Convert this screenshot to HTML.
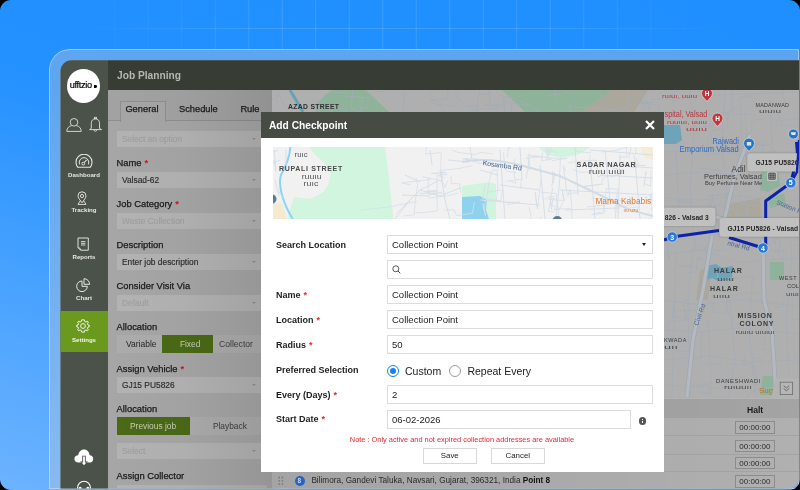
<!DOCTYPE html>
<html><head><meta charset="utf-8">
<style>
*{box-sizing:border-box;margin:0;padding:0}
html,body{width:800px;height:490px;overflow:hidden;background:#000;font-family:"Liberation Sans",sans-serif}
.a{position:absolute;white-space:nowrap}
#root{position:absolute;left:0;top:0;width:800px;height:490px;will-change:transform;border-radius:11px;overflow:hidden;
 background:linear-gradient(200deg,#1f8fff 0%,#2391ff 45%,#6db3ff 100%)}
#grid{position:absolute;left:0;top:0;width:800px;height:49px;
 background-image:linear-gradient(90deg,rgba(255,255,255,.13) 1px,transparent 1px),linear-gradient(0deg,rgba(255,255,255,.13) 1px,transparent 1px);
 background-size:33.5px 33.5px;background-position:13.75px 29px;
 -webkit-mask-image:radial-gradient(ellipse 330px 120px at 400px 20px,#000 40%,transparent 100%)}
#frame{position:absolute;left:49px;top:49px;width:750px;height:439.5px;border-radius:21px 0 0 0;background:rgba(190,200,215,.38);border:1px solid rgba(230,240,255,.45)}
#app{position:absolute;left:0;top:0;width:800px;height:490px;clip-path:inset(60.3px 1px 1.5px 60.5px round 11px 0 10px 0);background:#a2a2a2}
#side{left:60px;top:60px;width:48px;height:430px;background:#4b5249}
.sl{left:60px;width:48px;text-align:center;font-size:6.1px;font-weight:bold;color:#e6e8e4}
#hdr{left:108px;top:60px;width:700px;height:30px;background:#373c35}
#panel{left:108px;top:90px;width:164px;height:400px;background:#a6a6a6}
.lbl{left:116.5px;font-size:9.4px;color:#1a1a1a;-webkit-text-stroke:0.25px #1a1a1a}
.tab{top:103.6px;font-size:9.3px;color:#1a1a1a;-webkit-text-stroke:0.25px #1a1a1a}
.lbl b{color:#c4161c;font-weight:bold;margin-left:3px;-webkit-text-stroke:0}
.fld{left:116.5px;width:150px;height:16px;background:#b3b3b3;font-size:8.4px;color:#2c2c2c;-webkit-text-stroke:0.15px #2c2c2c;padding-left:5.5px;line-height:16px}
.fld.ph{color:#9f9f9f;-webkit-text-stroke:0.1px #9f9f9f}
.fld i{position:absolute;left:135px;top:7px;width:0;height:0;border-left:2.5px solid transparent;border-right:2.5px solid transparent;border-top:2.5px solid #909090}
#map{left:272px;top:90px;width:530px;height:307.5px;background:#a9a9a9;overflow:hidden}
#table{left:272px;top:397.5px;width:530px;height:95px;background:#b0b0b0}
#modal{left:261px;top:112px;width:403px;height:360px;background:#fff}
#mhdr{left:0;top:0;width:403px;height:26px;background:#464c44}
.ml{left:15px;font-size:9px;font-weight:bold;color:#1e1e1e}
.ml b{color:#e3262b;margin-left:3px}
.in{left:126px;width:266px;height:19.4px;border:1px solid #dcdcdc;font-size:9.5px;color:#222;padding-left:4px;line-height:18.4px}
.halt{left:735.1px;width:39.7px;height:12.7px;border:1px solid #8c8c8c;background:#b0b0b0;font-size:8px;color:#2a2a2a;text-align:center;line-height:11px}
.btn{top:336px;width:53.5px;height:15.5px;border:1px solid #d8d8d8;font-size:7.9px;color:#222;text-align:center;line-height:14.2px}
</style></head><body>
<div id="root">
 <div id="grid"></div>
 <div id="frame"></div>
 <div id="app">
  <div class="a" id="side"></div>
  <div class="a" style="left:66.6px;top:69px;width:33.6px;height:33.6px;border-radius:50%;background:#fff"></div>
  <span class="a" style="left:69.8px;top:80.2px;font-size:9.2px;letter-spacing:-0.35px;color:#000;-webkit-text-stroke:0.2px #000">ufftzio</span>
  <div class="a" style="left:94.2px;top:85px;width:2.4px;height:2.8px;border-radius:0 50% 50% 0;background:#000"></div>
  <svg class="a" style="left:66px;top:116.8px" width="16" height="16" viewBox="0 0 16 16"><circle cx="8" cy="5.3" r="3.8" fill="none" stroke="#dfe2dd" stroke-width="0.9"/><path d="M5.4 8.7 C2.8 9.3 0.8 11 0.8 14.4 L15.2 14.4 C15.2 11 13.2 9.3 10.6 8.7" fill="none" stroke="#dfe2dd" stroke-width="0.9" stroke-linejoin="round"/></svg>
  <svg class="a" style="left:89px;top:116px" width="14" height="17" viewBox="0 0 14 17"><rect x="5.4" y="1.3" width="2" height="1.5" fill="none" stroke="#dfe2dd" stroke-width="0.8"/><path d="M2.3 12.4 L2.3 7.2 C2.3 4.4 4 2.8 6.4 2.8 C8.8 2.8 10.5 4.4 10.5 7.2 L10.5 12.4 L12.6 13.6 L0.6 13.6 Z" fill="none" stroke="#dfe2dd" stroke-width="0.9" stroke-linejoin="round"/><path d="M4.7 13.8 C4.9 15.6 7.9 15.6 8.1 13.8" fill="none" stroke="#dfe2dd" stroke-width="0.9"/></svg>
  <svg class="a" style="left:74.5px;top:154.2px" width="18" height="14" viewBox="0 0 18 14"><path d="M2.8 13.3 A8 8 0 1 1 15.2 13.3 Z" fill="none" stroke="#e6e8e4" stroke-width="1.1" stroke-linejoin="round"/><path d="M4.6 10.4 A4.8 4.8 0 1 1 13.4 10.4" fill="none" stroke="#e6e8e4" stroke-width="1"/><circle cx="8.3" cy="9.6" r="1.4" fill="none" stroke="#e6e8e4" stroke-width="1"/><path d="M9.3 8.5 L11.6 5.8" stroke="#e6e8e4" stroke-width="1.1"/></svg>
  <span class="a sl" style="top:170.5px">Dashboard</span>
  <svg class="a" style="left:77.2px;top:191px" width="10" height="15" viewBox="0 0 10 15"><path d="M5 11.8 C3.2 9.2 1 7 1 4.8 A4 4 0 0 1 9 4.8 C9 7 6.8 9.2 5 11.8 Z" fill="none" stroke="#e6e8e4" stroke-width="0.95"/><circle cx="5" cy="5" r="1.6" fill="none" stroke="#e6e8e4" stroke-width="0.9"/><path d="M3.4 9.6 L1 13.4 L9 13.4 L6.6 9.6" fill="none" stroke="#e6e8e4" stroke-width="0.9"/></svg>
  <span class="a sl" style="top:205.5px">Tracking</span>
  <svg class="a" style="left:77.3px;top:236.5px" width="12" height="15" viewBox="0 0 12 15"><path d="M1 1 L11.3 1 L11.3 13.2 L3.6 13.2 L1 10.6 Z" fill="none" stroke="#e6e8e4" stroke-width="0.95" stroke-linejoin="round"/><path d="M1.2 10.8 C2.6 10.6 3.6 11.4 3.5 13" fill="none" stroke="#e6e8e4" stroke-width="0.9"/><path d="M4 4.6 L8.4 4.6 M4 6.3 L8.4 6.3 M4 8 L8.4 8" stroke="#e6e8e4" stroke-width="0.9"/></svg>
  <span class="a sl" style="top:252.5px">Reports</span>
  <svg class="a" style="left:76px;top:277.5px" width="15" height="15" viewBox="0 0 15 15"><path d="M6 3 A5.3 5.3 0 1 0 11.3 8.3 L6 8.3 Z" fill="none" stroke="#e6e8e4" stroke-width="1" stroke-linejoin="round"/><path d="M8 0.7 L8 6.3 L13.6 6.3 A5.6 5.6 0 0 0 8 0.7 Z" fill="none" stroke="#e6e8e4" stroke-width="1" stroke-linejoin="round"/></svg>
  <span class="a sl" style="top:294px">Chart</span>
  <div class="a" style="left:60px;top:311px;width:48px;height:41px;background:#6a991e"></div>
  <svg class="a" style="left:76px;top:318.5px" width="14" height="14" viewBox="0 0 14 14"><path d="M7 0.8 L8.3 0.9 L8.7 2.5 L10 3.1 L11.4 2.2 L12.3 3.2 L11.5 4.6 L12 6 L13.3 6.3 L13.3 7.7 L12 8 L11.5 9.4 L12.3 10.8 L11.4 11.8 L10 10.9 L8.7 11.5 L8.3 13.1 L5.7 13.1 L5.3 11.5 L4 10.9 L2.6 11.8 L1.7 10.8 L2.5 9.4 L2 8 L0.7 7.7 L0.7 6.3 L2 6 L2.5 4.6 L1.7 3.2 L2.6 2.2 L4 3.1 L5.3 2.5 L5.7 0.9 Z" fill="none" stroke="#f2f5ee" stroke-width="1" stroke-linejoin="round"/><circle cx="7" cy="7" r="2.4" fill="none" stroke="#f2f5ee" stroke-width="1"/></svg>
  <span class="a sl" style="top:335.5px;color:#f2f5ee">Settings</span>
  <svg class="a" style="left:74px;top:449px" width="20" height="18" viewBox="0 0 20 18"><path d="M4.6 13.6 C1.8 13.6 0.4 11.8 0.4 9.8 C0.4 7.6 2.2 6.2 4.2 6.2 C4.6 3 7 0.4 10 0.4 C13.2 0.4 15.4 3 15.6 6.2 C17.8 6.2 19.2 7.8 19.2 9.9 C19.2 11.9 17.8 13.6 15.4 13.6 Z" fill="#fff"/><path d="M8.2 6.8 L11.8 6.8 L11.8 12.6 L14 12.6 L10 17.2 L6 12.6 L8.2 12.6 Z" fill="#4b5249"/><path d="M9.1 7.6 L10.9 7.6 L10.9 13.4 L12.4 13.4 L10 16.2 L7.6 13.4 L9.1 13.4 Z" fill="#fff"/></svg>
  <svg class="a" style="left:75.5px;top:479.5px" width="16" height="12" viewBox="0 0 16 12"><path d="M1.6 9 L1.6 7.6 A6.4 6.4 0 0 1 14.4 7.6 L14.4 9" fill="none" stroke="#fff" stroke-width="1.1"/><ellipse cx="4.2" cy="8.8" rx="1.6" ry="2" fill="#fff"/><ellipse cx="11.8" cy="8.8" rx="1.6" ry="2" fill="#fff"/></svg>
  <div class="a" id="hdr"><span class="a" style="left:9px;top:9.8px;font-size:10.2px;font-weight:bold;color:#b4b7b2">Job Planning</span></div>
  <div class="a" id="panel"></div>
  <div class="a" style="left:108px;top:90px;width:164px;height:30.5px;background:#a2a2a2;border-bottom:1px solid #8e8e8e"></div>
  <div class="a" style="left:119.5px;top:100.5px;width:46px;height:21px;background:#a6a6a6;border:1px solid #8f8f8f;border-bottom:none"></div>
  <span class="a tab" style="left:125.4px">General</span>
  <span class="a tab" style="left:179px">Schedule</span>
  <span class="a tab" style="left:240.4px">Rule</span>
  <div class="a fld ph" style="top:131px">Select an option<i></i></div>
  <span class="a lbl" style="top:156.5px">Name<b>*</b></span>
  <div class="a fld" style="top:172px">Valsad-62<i></i></div>
  <span class="a lbl" style="top:198px">Job Category<b>*</b></span>
  <div class="a fld ph" style="top:213px">Waste Collection<i></i></div>
  <span class="a lbl" style="top:239px">Description</span>
  <div class="a fld" style="top:254.3px">Enter job description<i></i></div>
  <span class="a lbl" style="top:280px">Consider Visit Via</span>
  <div class="a fld ph" style="top:295px">Default<i></i></div>
  <span class="a lbl" style="top:321px">Allocation</span>
  <div class="a" style="left:116.5px;top:335px;width:150px;height:17.5px;background:#acacac"></div>
  <div class="a" style="left:162px;top:335px;width:51px;height:17.5px;background:#4a6a16"></div>
  <span class="a" style="left:126px;top:339px;font-size:8.5px;color:#262626">Variable</span>
  <span class="a" style="left:179.9px;top:339px;font-size:8.4px;color:#c5ceb9">Fixed</span>
  <span class="a" style="left:219px;top:339px;font-size:8.6px;color:#3c3c3c">Collector</span>
  <span class="a lbl" style="top:362.5px">Assign Vehicle<b>*</b></span>
  <div class="a fld" style="top:377px">GJ15 PU5826<i></i></div>
  <span class="a lbl" style="top:403px">Allocation</span>
  <div class="a" style="left:116.5px;top:417px;width:150px;height:17.5px;background:#acacac"></div>
  <div class="a" style="left:116.5px;top:417px;width:73.5px;height:17.5px;background:#4a6a16"></div>
  <span class="a" style="left:130px;top:421px;font-size:8.4px;color:#c5ceb9">Previous job</span>
  <span class="a" style="left:212.9px;top:421px;font-size:8.4px;color:#3c3c3c">Playback</span>
  <div class="a fld ph" style="top:443px">Select<i></i></div>
  <span class="a lbl" style="top:470px">Assign Collector</span>
  <div class="a fld" style="top:484.5px"></div>
  <div class="a" style="left:108px;top:90px;width:164px;height:400px;background:linear-gradient(90deg,rgba(0,0,0,0) 0%,rgba(0,0,0,.025) 45%,rgba(0,0,0,.1) 100%)"></div>
  <div class="a" style="left:271.5px;top:90px;width:1px;height:400px;background:#8a8a8a"></div>
  <svg class="a" style="left:272px;top:90px" width="527" height="308" viewBox="272 90 527 308">
   <rect x="272" y="90" width="527" height="308" fill="#afafaf"/>
   <g fill="#8fb39a">
    <path d="M333 90 L366 90 L389 112 L316 112 C318 100 326 93 333 90 Z"/>
    <circle cx="322" cy="106" r="6"/>
    <path d="M502 90 L612 90 L582 112 L525 112 Z"/>
    <path d="M770 262 L784 262 L784 280 L770 280 Z"/>
    <path d="M763 376 L775 376 L773 395 L760 395 Z"/>
    <path d="M762 170 L778 168 L780 186 L768 192 L760 190 Z"/>
    <path d="M768 196 L784 194 L786 204 L770 208 Z"/>
   </g>
   <g fill="#aba79d">
    <path d="M612 90 L648 90 L634 112 L582 112 Z"/>
    <path d="M724 205 L760 198 L762 222 L730 226 Z"/>
    <path d="M700 270 L712 268 L708 300 L696 300 Z"/>
   </g>
   <g fill="#6fa3b9">
    <path d="M664 125 L680 125 L682 140 L676 144 L664 144 Z"/>
    <path d="M706 266 L716 264 L722 268 L733 266 L732 280 L718 281 L712 278 L706 280 Z"/>
   </g>
   <path d="M290 90 L303 112" stroke="#6aa0b6" stroke-width="3" fill="none"/>
   <g stroke="#a5acb5" fill="none" stroke-width="0.8">
    <path d="M272 100 L285 92 M279 95 L288 112 M345 96 L372 98 M400 92 L420 112 M428 90 L445 112 M455 95 L470 110 L500 108 M480 90 L476 112 M520 100 L540 112 M640 92 L645 112 M600 95 L620 112 M650 100 L664 98"/>
    <path d="M664 100 L700 96 L740 94 L798 92 M664 152 L720 150 L760 160 L798 158 M664 175 L700 172 L745 176 M664 198 L700 200 L740 196 L780 200 M664 255 L700 250 L740 262 L798 258 M664 300 L700 305 L740 300 L798 306 M664 330 L700 332 L740 328 L798 334 M664 360 L710 356 L750 362 L798 360 M664 385 L720 388 L760 384"/>
    <path d="M690 90 L694 130 L690 190 L694 240 L688 300 L690 397 M725 90 L722 150 L728 200 M745 110 L748 170 M752 280 L750 340 L756 397 M730 300 L735 360 L728 397 M708 320 L712 397 M676 150 L680 230 M676 250 L672 397 M788 210 L792 260 L786 320 L790 397 M740 94 L742 150 M770 100 L772 150"/>
   </g>
   <g stroke="#a5acb5" fill="none" stroke-width="0.8">
    <path d="M707.7 136.3 L706.9 155.5 L721.0 153.0 M696.5 259.2 L704.5 260.0 L697.5 257.3 L696.2 272.2 L688.3 272.5 M677.9 265.4 L692.7 265.7 L678.7 267.4 M788.7 201.0 L805.8 198.5 L807.2 184.6 M796.3 126.2 L787.9 125.8 L780.6 124.8 L778.1 110.9 M700.4 304.0 L683.2 302.7 L685.9 319.4 L670.1 316.8 L678.2 316.1 M731.0 141.1 L710.9 143.3 L712.0 130.6 L721.7 128.7 M695.5 238.9 L695.0 249.4 L710.1 250.5 L726.0 250.3 M792.5 298.9 L792.4 311.3 L792.0 320.4 L807.6 317.4 M677.7 201.6 L693.5 202.4 L677.9 200.2 M798.1 233.1 L789.8 234.5 L806.8 232.7 M712.8 301.9 L714.0 312.6 L725.9 311.8 L726.7 297.1 L728.5 315.7 M763.9 159.6 L765.6 177.3 L765.3 168.2 L762.8 146.4 M727.5 193.7 L708.0 196.1 L710.5 212.4 L712.8 194.4 L714.6 210.6 M717.4 213.2 L714.6 221.8 L715.3 235.2 L713.2 221.6 L713.4 228.0 M722.6 357.6 L721.3 364.1 L705.9 364.3 M672.2 317.2 L674.2 301.8 L674.3 309.9 L687.4 310.6 L695.8 310.4 M739.1 190.1 L741.4 203.8 L750.5 205.4 L765.5 205.1 L779.6 206.2 M736.0 236.8 L738.5 222.4 L736.4 213.1 L749.4 214.2 L740.0 215.9 M684.9 309.8 L687.7 319.9 L666.4 322.2 M754.2 158.7 L752.3 146.2 L769.9 145.2 L752.6 144.2 L766.8 141.9 M694.9 359.1 L701.5 357.7 L700.9 344.9 L702.1 330.7 M671.8 301.3 L682.1 302.1 L689.4 299.5 M725.3 194.1 L725.4 210.1 L733.2 208.6 L733.4 187.7 M724.2 296.4 L746.1 293.4 L760.9 293.5 M724.4 292.1 L727.2 278.2 L736.6 277.2 L753.9 276.7 L751.0 283.5 M782.8 222.2 L763.3 222.8 L770.0 220.8 L759.8 223.6 L749.9 221.9 M709.3 115.8 L718.5 113.3 L726.8 112.7 L727.3 128.7 L728.9 110.7 M730.7 177.2 L732.1 170.5 L734.1 178.8 M784.5 299.6 L782.3 307.0 L774.7 307.4 M748.5 299.0 L761.9 300.5 L776.4 301.9 M773.2 349.8 L763.6 349.7 L765.2 336.1 M750.8 113.8 L734.3 114.5 L733.0 100.8 L731.7 83.7 M726.7 233.2 L735.9 235.8 L738.9 222.4 L759.5 219.9 L762.3 201.9 M774.7 246.2 L777.1 234.3 L779.8 240.7 L779.3 253.2 L771.4 250.2 M777.3 126.9 L775.8 120.7 L788.0 119.8 L798.4 118.5 L796.9 135.1 M733.0 148.3 L712.8 150.8 L727.6 148.1 L740.8 148.9 M670.6 374.5 L658.0 373.3 L636.4 372.7 L634.1 359.0 M674.1 243.7 L677.1 234.2 L675.6 242.4 L660.7 240.8 L662.2 255.9 M719.9 250.9 L701.8 249.6 L709.9 247.1 L697.7 246.7 M773.9 387.2 L756.6 390.0 L749.4 392.8 L747.3 400.6 M678.7 343.4 L675.7 350.8 L690.8 351.6 L691.0 343.6 M767.1 120.5 L758.1 118.9 L751.9 121.8 L751.7 132.9 L741.8 134.1 M666.9 243.0 L667.9 250.3 L669.1 259.9 L667.3 248.1 M763.8 245.0 L774.8 243.4 L772.4 225.2 M746.4 365.2 L753.3 367.7 L752.8 374.1 L755.1 365.2 L757.7 382.9 M689.0 377.3 L691.1 366.3 L688.1 379.4 M711.4 383.3 L699.4 385.3 L692.6 383.4 M724.3 189.3 L722.7 182.8 L720.0 170.3 L699.2 168.5 M745.8 201.4 L739.1 204.0 L736.2 221.5 L722.6 224.2 L724.5 214.2 M731.0 92.7 L731.7 111.8 L720.6 113.5 L706.4 115.1 M672.7 100.4 L675.0 91.8 L673.3 102.1 L671.3 80.2 M726.2 363.6 L745.8 365.3 L745.0 354.8 L743.1 364.0 L753.6 363.0 M798.0 245.7 L814.4 243.4 L795.3 245.8 M703.6 126.6 L712.8 125.8 L699.6 127.5 L693.5 125.8 L696.5 134.1 M762.9 370.6 L761.0 358.0 L751.7 358.3 L752.7 350.7 M736.1 290.5 L723.5 291.5 L716.7 291.0 L717.6 272.7 M718.7 379.2 L731.5 378.6 L744.8 376.4 M683.2 337.6 L667.3 339.0 L667.4 350.6 L668.9 342.8 L666.7 324.0 M795.7 238.2 L807.9 239.0 L823.8 241.0 L826.5 231.5 L838.2 230.0 M785.1 102.6 L782.8 96.0 L783.7 81.2 L773.7 82.2 L786.8 79.2 M726.8 227.2 L726.2 207.8 L714.5 205.3 L728.6 202.6 M788.5 186.3 L789.4 179.4 L792.4 185.9 M774.0 149.5 L775.1 160.1 L775.8 150.5 L764.6 153.0 M698.3 386.0 L708.5 385.0 L709.3 393.9 L698.1 391.9 L705.9 392.7 M781.8 260.4 L783.3 250.4 L771.3 250.9 M767.2 225.8 L745.9 227.7 L747.3 211.5 L748.0 201.9 L745.8 216.1 M752.2 96.8 L741.3 97.0 L752.1 95.3 L765.7 92.4 M759.5 228.4 L739.6 227.8 L740.1 221.6 M745.3 248.9 L765.7 246.3 L763.1 255.2"/>
    <path d="M276.8 102.1 L278.7 89.5 L267.8 90.3 M555.9 100.5 L553.4 81.0 L552.0 89.8 L553.2 81.8 M489.1 99.6 L489.9 78.0 L488.0 87.5 L490.6 107.0 L489.6 95.8 M627.8 103.9 L627.6 84.4 L627.2 90.5 L629.0 75.4 L644.3 73.3 M313.8 110.4 L331.0 107.7 L347.2 109.1 M503.5 98.0 L505.7 118.3 L503.4 100.9 L511.2 103.6 L529.2 105.5 M384.6 92.2 L375.4 91.2 L372.7 79.6 L374.8 59.0 L372.0 52.5 M310.5 100.3 L320.0 100.8 L318.7 113.7 L318.7 106.9 L321.5 125.6 M647.2 101.3 L649.9 111.9 L658.5 111.8 M492.0 92.3 L479.6 94.7 L492.3 93.9 M439.8 102.0 L430.1 99.7 L447.1 98.8 L448.1 90.4 L449.2 81.6 M362.6 97.3 L361.2 107.2 L362.5 126.4 L360.5 108.8 L369.5 106.8 M348.6 93.3 L330.9 92.0 L329.1 71.4 L322.6 73.5 M359.2 111.6 L350.9 108.6 L353.0 89.0 M527.8 109.3 L528.6 128.9 L531.0 140.0 L543.4 138.5 L530.1 138.6 M614.2 109.7 L602.0 112.1 L600.0 122.1 M640.7 101.4 L654.0 102.7 L637.8 102.9 L659.0 105.8 L660.3 120.0 M521.9 95.6 L515.7 98.0 L498.9 95.7 M429.0 111.0 L426.8 124.4 L426.6 143.3 L425.7 152.9 M592.9 108.0 L611.1 109.6 L629.6 108.2 L630.7 98.2 M587.7 107.6 L576.9 107.5 L569.5 105.4 L571.5 117.6 L571.7 136.1 M500.3 104.5 L483.8 105.1 L503.5 106.8 M331.8 109.9 L332.9 125.6 L331.0 107.0 M480.1 106.3 L465.2 105.8 L478.8 105.7 M546.6 95.4 L566.4 93.4 L567.4 76.3 L570.4 64.3 L571.2 55.4 M511.0 105.0 L511.1 124.0 L509.3 144.3 L511.5 152.3 M458.0 101.6 L457.6 91.0 L456.7 71.8 M402.8 111.7 L404.6 90.1 L393.5 87.8 L400.9 87.2 M431.2 102.6 L437.3 104.6 L455.5 106.3 M511.8 103.6 L510.1 120.6 L507.7 133.9 L514.3 136.4 L526.2 138.1"/>
   </g>
   <g stroke="#9fa6af" fill="none" stroke-width="4.6">
    <path d="M763 240 L764 300 L772 330 L776 397"/>
    <path d="M712 236 L703 290 L693 340 L687 397"/>
    <path d="M664 210 L700 212 L745 226 M750 135 L735 175 L722 230"/>
    
   </g>
   <g stroke="#b4b9c0" fill="none" stroke-width="3.2">
    <path d="M763 240 L764 300 L772 330 L776 397"/>
    <path d="M712 236 L703 290 L693 340 L687 397"/>
    <path d="M664 210 L700 212 L745 226 M750 135 L735 175 L722 230"/>
    
   </g>
   <text x="288" y="108.8" font-family="Liberation Sans" font-weight="bold" font-size="6.8" textLength="51" lengthAdjust="spacing" fill="#2e2e2e">AZAD STREET</text>
   <path d="M701.5 93.5 A5.5 5.5 0 1 1 712.5 93.5 C712.5 97.35 708.5 98.45 707 101.8 C705.5 98.45 701.5 97.35 701.5 93.5 Z" fill="#c2343d" stroke="#cfcfcf" stroke-width="0.9"/><path d="M712.0 118.5 A5.5 5.5 0 1 1 723.0 118.5 C723.0 122.35 719.0 123.45 717.5 126.8 C716.0 123.45 712.0 122.35 712.0 118.5 Z" fill="#c2343d" stroke="#cfcfcf" stroke-width="0.9"/>
   <g fill="#fff" font-family="Liberation Sans" font-weight="bold" font-size="6.5" text-anchor="middle">
    <text x="707" y="96">H</text><text x="717.5" y="121">H</text>
   </g>
   <g fill="#b6363d" font-family="Liberation Sans">
    <text x="664.5" y="116.5" font-size="8.6" textLength="42.8" lengthAdjust="spacingAndGlyphs">spital, Valsad</text>
    <text x="662" y="97.5" font-size="6" textLength="35" lengthAdjust="spacingAndGlyphs">ruıuı, uuıu</text>
    <text x="667" y="124" font-size="6" textLength="40" lengthAdjust="spacingAndGlyphs">ruuıuı, uuıu</text>
    <text x="686" y="131" font-size="6" textLength="21" lengthAdjust="spacingAndGlyphs">uuıu</text>
   </g>
   <g fill="#2c6bc1" font-family="Liberation Sans" font-size="8.8">
    <text x="712.5" y="143.5" textLength="26.3" lengthAdjust="spacingAndGlyphs">Rajwadi</text>
    <text x="679.6" y="151.5" textLength="59.2" lengthAdjust="spacingAndGlyphs">Emporium Valsad</text>
   </g>
   <path d="M743.5 143.5 A5.5 5.5 0 1 1 754.5 143.5 C754.5 147.35 750.5 148.45 749 151.8 C747.5 148.45 743.5 147.35 743.5 143.5 Z" fill="#2a74c6" stroke="#cfcfcf" stroke-width="0.9"/>
   <rect x="746.8" y="142" width="4.4" height="3.6" fill="#d7e3f0"/>
   <circle cx="793.4" cy="134" r="5" fill="#2a74c6" stroke="#c9d3de" stroke-width="0.8"/><path d="M790.8 132.2 L796 132.2 L795.2 135 L791.6 135 Z" fill="#dfe8f2"/>
   <g fill="#3a3a3a" font-family="Liberation Sans" font-size="6.2" letter-spacing="0.6">
    <text x="755.4" y="107.2" font-size="5.4" textLength="34.2" lengthAdjust="spacing">MADANWAD</text>
    <text x="714" y="273" font-weight="bold" font-size="7" letter-spacing="0.8">HALAR</text>
    <text x="710" y="291" font-weight="bold" font-size="7" letter-spacing="0.8">HALAR</text>
    <text x="737.5" y="318" font-weight="bold" font-size="7" letter-spacing="0.8">MISSION</text>
    <text x="739.5" y="326" font-weight="bold" font-size="7" letter-spacing="0.8">COLONY</text>
    <text x="716" y="382.5" font-size="5.8">DANESHWADI</text>
    <text x="779" y="280" font-size="5.5">WEST R</text>
    <text x="664" y="342" font-size="5.5">KWADA</text>
   </g>
   <g fill="#4a4a4a" font-family="Liberation Sans" font-size="6.2" lengthAdjust="spacingAndGlyphs">
    <text x="759" y="113" textLength="22" lengthAdjust="spacingAndGlyphs">uıuıu</text>
    <text x="717" y="280.5" textLength="17" lengthAdjust="spacingAndGlyphs">uııu</text>
    <text x="713" y="297.5" textLength="17" lengthAdjust="spacingAndGlyphs">uııu</text>
    <text x="735.5" y="333.5" textLength="39" lengthAdjust="spacingAndGlyphs">ruuıu uıuıuı</text>
    <text x="724" y="388.5" textLength="28" lengthAdjust="spacingAndGlyphs">ruıuuıı</text>
    <text x="664" y="349" textLength="14" lengthAdjust="spacingAndGlyphs">uıı</text>
    <text x="786" y="296" textLength="13" lengthAdjust="spacingAndGlyphs">uıuı</text>
   </g>
   <text x="787" y="288" font-family="Liberation Sans" font-size="5.8" fill="#3a3a3a">COL</text>
   <g fill="#3d3d3d" font-family="Liberation Sans">
    <text x="731.6" y="171.5" font-size="8.4">Adil</text>
    <text x="704" y="179" font-size="7.4">Perfumes, Valsad</text>
    <text x="705" y="185" font-size="5.8">Buy Perfume Near Me</text>
   </g>
   <text x="759" y="393" font-family="Liberation Sans" font-size="8" fill="#b8742e">Sug</text>
   <g fill="#4a6490" font-family="Liberation Sans" font-size="6.5">
    <text x="0" y="0" transform="translate(698 326) rotate(-70)">Civil Rd</text>
    <text x="0" y="0" transform="translate(776 204) rotate(22)">Station Ro</text>
    <text x="0" y="0" transform="translate(727 245) rotate(14)">ntral Rd</text>
   </g>
   <g fill="none" stroke="#0d22a8" stroke-width="3" stroke-linejoin="round">
    <path d="M664 240 L672 237 L719 230.5 M729 237.5 L763 248"/>
    <path d="M763 248 L765.7 245 L765.7 201 L790.8 182.8 L794 170 L798 150"/>
    <path d="M796.5 142 L798 160"/>
   </g>
   <g fill="#2a7ad4" stroke="#c8d2e0" stroke-width="0.8">
    <circle cx="672.2" cy="237" r="5.2"/><circle cx="763" cy="248" r="5.2"/><circle cx="791" cy="183.5" r="5.2"/>
   </g>
   <g fill="#fff" font-family="Liberation Sans" font-size="7" text-anchor="middle" font-weight="bold">
    <text x="672.2" y="239.6">3</text><text x="763" y="250.6">4</text><text x="791" y="186">5</text>
   </g>
   <g fill="#c0c0c0" style="filter:drop-shadow(0 0.5px 1px rgba(0,0,0,.25))">
    <rect x="747.3" y="153.2" width="60" height="18.3" rx="3"/>
    <rect x="640" y="207.6" width="75.5" height="18.3" rx="3"/>
    <rect x="719.4" y="218" width="85" height="18.8" rx="3"/>
   </g>
   <g fill="#262626" font-family="Liberation Sans" font-weight="bold" font-size="6.7" letter-spacing="0.05">
    <text x="755.5" y="165.2">GJ15 PU5826</text>
    <text x="664.8" y="220" textLength="44" lengthAdjust="spacingAndGlyphs">826 - Valsad 3</text>
    <text x="727.6" y="230.5">GJ15 PU5826 - Valsad</text>
   </g>
   <rect x="767" y="171.5" width="10" height="9.5" rx="1" fill="#c2c2c2"/>
   <path d="M768.8 173.2 h6.4 v6 h-6.4 z M770.9 173.2 v6 M773.1 173.2 v6 M768.8 175.2 h6.4 M768.8 177.2 h6.4" fill="none" stroke="#3a3a3a" stroke-width="0.8"/>
   <path d="M790.8 182.8 L797 172 L799 140" fill="none" stroke="#0d22a8" stroke-width="2.4"/>
   <circle cx="790.8" cy="182.8" r="5.2" fill="#2a7ad4" stroke="#c8d2e0" stroke-width="0.8"/>
   <text x="790.8" y="185.4" fill="#fff" font-family="Liberation Sans" font-size="7" text-anchor="middle" font-weight="bold">5</text>
   <path d="M775.5 378.5 L799 378.5 L799 398 L771 398 Z" fill="#b3b3b3"/>
   <rect x="780.2" y="382.2" width="12.4" height="12.4" fill="#b6b6b6" stroke="#6e6e6e" stroke-width="0.8"/>
   <path d="M783.6 385.6 L786.4 388 L789.2 385.6 M783.6 388.4 L786.4 390.8 L789.2 388.4" fill="none" stroke="#555" stroke-width="0.8"/>
  </svg>
  <div class="a" id="table"></div>
  <div class="a" style="left:272px;top:397.5px;width:530px;height:20.3px;background:#a4a4a4;border-top:1px solid #b4b4b4"></div>
  <div class="a" style="left:272px;top:397.5px;width:530px;height:95px;background:linear-gradient(90deg,rgba(0,0,0,.07) 0%,rgba(0,0,0,.04) 50%,rgba(0,0,0,0) 100%)"></div>
  <span class="a" style="left:747px;top:404.5px;font-size:8.6px;font-weight:bold;color:#1a1a1a">Halt</span>
  <div class="a" style="left:272px;top:435.2px;width:530px;height:1px;background:#a3a3a3"></div>
  <div class="a" style="left:272px;top:454.1px;width:530px;height:1px;background:#a3a3a3"></div>
  <div class="a" style="left:272px;top:471.2px;width:530px;height:1px;background:#a3a3a3"></div>
  <div class="a halt" style="top:421px">00:00:00</div>
  <div class="a halt" style="top:439.5px">00:00:00</div>
  <div class="a halt" style="top:456.7px">00:00:00</div>
  <div class="a halt" style="top:475.4px">00:00:00</div>
  <svg class="a" style="left:278px;top:476px" width="6" height="10" viewBox="0 0 6 10"><g fill="#7a7a7a"><circle cx="1.2" cy="1.5" r="0.9"/><circle cx="4.4" cy="1.5" r="0.9"/><circle cx="1.2" cy="4.8" r="0.9"/><circle cx="4.4" cy="4.8" r="0.9"/><circle cx="1.2" cy="8.1" r="0.9"/><circle cx="4.4" cy="8.1" r="0.9"/></g></svg>
  <div class="a" style="left:294.5px;top:475.7px;width:10px;height:10px;border-radius:50%;background:#2563c0"></div>
  <span class="a" style="left:297.5px;top:477.2px;font-size:6.5px;font-weight:bold;color:#cfd8e8">8</span>
  <span class="a" style="left:311.4px;top:476.3px;font-size:8.23px;color:#2a2a2a">Bilimora, Gandevi Taluka, Navsari, Gujarat, 396321, India <b style="color:#111">Point 8</b></span>
 </div>
 <div class="a" id="modal">
  <div class="a" id="mhdr"><span class="a" style="left:8px;top:7.5px;font-size:10.2px;font-weight:bold;color:#fff">Add Checkpoint</span>
   <svg class="a" style="left:384px;top:8px" width="10" height="10" viewBox="0 0 10 10"><path d="M1 1 L9 9 M9 1 L1 9" stroke="#fff" stroke-width="2.2"/></svg></div>
  <svg class="a" style="left:12px;top:35px" width="380" height="71.5" viewBox="273 147 380 71.5">
   <rect x="273" y="147" width="380" height="72" fill="#f2f1f1"/>
   <path d="M310 147 L385.4 147 L393.6 219 L287 219 C290 210 292 202 294.4 197 L310.6 198.7 C318 196 324 192 326 188 C330 182 331 176 330 172 C327 165 322 160 318.8 158 C314 154 311 150 310 147 Z" fill="#d2f5e0"/>
   <path d="M539 147 L590 147 C585 152 575 157 560 157 C548 156 542 152 539 147 Z" fill="#d0f4de"/>
   <path d="M462 186 L490 182 L496 184 L496 219 L462 219 Z" fill="#d0f4de"/>
   <path d="M462 197 L480 196 L487 200 L486 210 L489 219 L462 219 Z" fill="#8ed2ee"/>
   <path d="M640 147 L653 147 L653 160 L645 158 Z" fill="#f4ecd8"/>
   <path d="M273 202 L282 204 L287 219 L273 219 Z" fill="#f5ead0"/><path d="M274 150 L276 170 M273 163 L280 160 M275 180 L279 196" fill="none" stroke="#d3dce6" stroke-width="0.8"/>
   <path d="M290.3 147 C290 156 286 166 281 175 C278 184 282 202 292.8 219" fill="none" stroke="#8ad4f4" stroke-width="2"/>
   <g fill="none" stroke="#d3dce6" stroke-width="0.9">
    <path d="M273 152 L278 150 M274 160 L276 172 M286 150 L286 165 M278 190 L283 198"/>
    <path d="M396 214 L420 190 L440 180 M405 175 L420 182 M395 219 L410 200 M440 170 L445 200 L450 219 M448 160 L470 162 M430 150 L432 165 M470 147 L472 160 M402 195 L430 196 M420 190 L440 196 L460 188"/>
    <path d="M462 162 C480 158 500 160 520 165 L560 176 L600 195 L630 210 L653 216"/>
    <path d="M500 150 L505 219 M520 147 L522 180 M540 165 L545 219 M560 176 L556 219 M575 147 L578 195 M590 160 L595 219 M605 150 L610 200 M620 155 L618 219 M635 160 L640 219 M600 175 L653 178 M560 190 L653 195 M500 185 L540 190 M480 200 L540 205 M565 210 L620 208 M590 150 L653 155 M610 165 L653 168 M480 170 L498 175"/>
   </g>
   <path d="M552.8 187.3 L550.9 198.2 L548.5 211.4 L554.6 211.9 M552.9 200.2 L550.3 205.4 L558.4 207.1 L558.5 219.7 L558.3 231.2 M652.6 218.7 L652.6 227.0 L665.0 226.4 L675.0 228.5 L674.8 236.2 M542.7 152.3 L541.6 160.8 L551.9 158.6 L546.8 160.4 L546.8 148.1 M610.8 177.2 L621.3 174.2 L603.6 177.2 L600.9 184.6 M550.8 147.7 L548.3 157.7 L547.6 149.6 L549.6 132.1 M540.7 192.2 L556.3 193.5 L557.4 206.7 M558.3 152.7 L552.8 151.1 L544.5 149.8 M601.8 152.0 L615.3 150.6 L623.0 148.0 L631.2 146.1 L628.8 158.5 M552.4 170.8 L553.0 183.4 L554.2 172.3 L554.1 177.5 L551.5 186.7 M604.9 211.8 L604.0 205.1 L606.6 188.4 L618.1 189.2 L615.6 201.7 M651.8 210.3 L651.4 193.2 L650.3 199.3 L655.6 199.3 M638.4 165.4 L645.3 165.5 L635.9 165.5 L634.0 155.3 M617.5 212.8 L615.8 205.0 L625.3 206.2 L633.9 203.9 M639.4 206.8 L628.0 208.1 L614.9 205.6 L615.9 221.9 L625.5 222.8 M504.8 202.4 L520.1 202.1 L506.6 204.8 M506.5 181.2 L521.3 179.3 L520.7 188.8 M635.8 153.3 L635.6 143.2 L635.9 126.4 L635.6 114.9 L633.9 122.5 M649.4 217.4 L648.5 225.8 L637.8 227.4 L643.2 227.0 M567.6 196.4 L570.2 189.5 L571.8 206.8 L571.9 219.1 M572.5 169.4 L580.2 172.3 L592.6 171.7 L589.8 166.7 L590.1 154.9 M492.3 153.7 L481.3 152.3 L474.7 154.7 L457.7 152.4 L452.4 150.2 M474.2 161.0 L465.5 159.4 L477.0 161.6 L462.6 158.7 L478.4 158.9 M567.7 162.7 L580.7 161.1 L596.2 160.0 L597.9 177.0 L604.1 174.8 M541.0 178.3 L539.2 193.6 L537.4 209.0 L535.1 192.1 L536.9 207.0 M474.4 201.9 L472.6 213.1 L456.6 215.7 L454.1 209.9 L444.0 210.0 M580.0 148.0 L579.1 140.6 L596.1 138.2 M529.2 153.1 L529.3 170.3 L527.9 154.9 L542.6 156.7 L525.9 158.4 M544.3 199.0 L553.2 196.1 L551.6 209.4 L549.9 195.7 M503.3 152.5 L504.9 165.9 L506.3 171.2 L516.5 172.7 M472.0 165.6 L459.8 168.4 L441.9 170.3 L441.2 183.0 M540.6 216.8 L540.2 229.8 L540.8 221.1 L532.1 221.5 L529.2 207.1 M577.2 192.6 L567.1 194.1 L564.6 176.2 L563.1 165.6 L565.7 171.2 M555.7 217.5 L556.5 231.7 L555.6 239.3 L565.3 240.3 L556.9 239.5 M619.2 156.9 L627.3 156.9 L625.9 145.3 M602.7 197.3 L617.5 200.0 L631.0 202.3 L629.5 196.5 M477.0 163.0 L493.8 163.3 L484.0 162.5 M560.5 156.6 L560.1 167.4 L559.4 177.5 M651.0 170.4 L650.6 186.2 L644.3 183.6 L646.2 171.3 L643.7 187.0 M591.2 152.9 L576.2 151.6 L575.4 141.9 L561.2 141.6 L552.2 139.9 M603.6 184.2 L598.2 184.7 L583.6 186.5 L599.5 184.5 M631.2 167.3 L637.0 167.7 L623.5 165.1 L638.7 164.1 L636.2 157.7 M496.3 200.7 L497.9 186.4 L497.0 171.5 M530.9 156.8 L536.9 156.3 L550.5 158.1 L567.1 158.3 L551.7 160.8 M515.0 158.7 L514.3 165.9 L514.1 174.4 L515.8 183.4 L510.0 180.5 M616.5 169.5 L624.3 170.1 L612.7 168.2 L613.4 161.0 M570.7 208.4 L553.8 209.4 L560.0 208.8 L562.9 202.1 M611.7 203.7 L595.1 206.1 L586.9 206.8 M498.7 170.2 L492.0 170.3 L489.0 182.7 L486.5 198.7 L500.8 201.0 M485.2 200.9 L484.7 209.8 L482.9 203.7 L485.6 215.5 L483.1 206.4 M555.5 198.5 L548.7 199.5 L563.9 200.5 L562.3 190.6 L564.4 201.5 M601.6 211.9 L591.7 214.6 L604.0 213.2 L602.8 198.7 L591.7 198.3 M488.6 191.8 L502.8 189.9 L500.5 200.9 L482.6 200.4 L485.2 183.4 M507.6 157.7 L508.3 148.3 L511.2 135.4 L509.8 149.0 M526.1 178.8 L528.1 167.1 L528.4 160.1 M428.0 176.9 L428.4 194.9 L442.0 192.7 L431.6 191.7 L421.9 194.0 M442.7 181.7 L440.7 169.4 L441.3 152.7 L425.6 153.9 L427.6 139.0 M431.1 173.7 L446.2 172.6 L431.6 173.3 M444.9 177.8 L438.0 175.5 L447.4 174.1 M417.3 201.4 L402.0 204.2 L390.9 206.6 L378.6 208.1 L360.6 210.0 M403.3 216.0 L414.0 214.9 L415.3 200.5 L417.6 185.7 L416.1 177.5 M458.2 193.3 L446.2 196.0 L428.2 198.2 M447.5 180.9 L445.1 187.5 L442.1 180.9 L433.2 178.9 L422.4 176.7 M410.8 185.0 L401.8 182.9 L416.9 181.1 L430.9 179.3 M418.7 193.2 L436.6 193.4 L437.5 210.7 L421.9 212.9 L415.1 212.4 M451.1 175.9 L451.1 183.3 L459.7 183.8 L460.7 192.7 M437.0 174.4 L437.1 191.3 L424.3 191.6 L436.7 190.3" fill="none" stroke="#d6dee7" stroke-width="0.8"/>
   <path d="M462 162 C480 158 500 160 520 165 L560 176 L600 195 L630 210 L653 216" fill="none" stroke="#d3dce6" stroke-width="2"/>
   
   <g font-family="Liberation Sans" font-weight="bold" fill="#4a4a4a" letter-spacing="0.9">
    <text x="279.1" y="170.8" font-size="7" textLength="64" lengthAdjust="spacing">RUPALI STREET</text>
    <text x="576.6" y="166.5" font-size="7.2" textLength="60" lengthAdjust="spacing">SADAR NAGAR</text>
   </g>
   <g font-family="Liberation Sans" fill="#555" font-size="6">
    <text x="294.6" y="156.5" font-size="7" textLength="13" lengthAdjust="spacingAndGlyphs">ruıc</text>
    <text x="301.7" y="178.5" font-size="7" textLength="20" lengthAdjust="spacingAndGlyphs">ruuıu</text>
    <text x="303.6" y="186" font-size="7" textLength="14.7" lengthAdjust="spacingAndGlyphs">ruıc</text>
    <text x="588.7" y="173.5" font-size="7" textLength="36" lengthAdjust="spacingAndGlyphs">ruıu uıuı</text>
   </g>
   <text x="0" y="0" transform="translate(482.5 165) rotate(8)" font-family="Liberation Sans" font-size="6.8" fill="#3d5a8c">Kosamba Rd</text>
   <text x="595.4" y="203.5" font-family="Liberation Sans" font-size="8.4" fill="#e2772d">Mama Kababis</text>
   <text x="623.6" y="212" font-family="Liberation Sans" font-size="6" fill="#e2772d" textLength="14.5" lengthAdjust="spacingAndGlyphs">ııu uzu</text>
   <circle cx="557.3" cy="221" r="5" fill="#5f7a8c"/>
   <circle cx="272" cy="199" r="4.5" fill="#5f7a8c"/>
  </svg>
  <span class="a ml" style="top:127.5px">Search Location</span>
  <div class="a in" style="top:122.8px">Collection Point<i style="position:absolute;left:254px;top:7.5px;border-left:2.5px solid transparent;border-right:2.5px solid transparent;border-top:3px solid #222"></i></div>
  <div class="a in" style="top:147.8px"><svg class="a" style="left:3.5px;top:4px" width="9" height="9" viewBox="0 0 9 9"><circle cx="3.8" cy="3.8" r="3" fill="none" stroke="#444" stroke-width="0.9"/><path d="M6 6 L8.3 8.3" stroke="#444" stroke-width="1"/></svg></div>
  <span class="a ml" style="top:177.5px">Name<b>*</b></span>
  <div class="a in" style="top:172.9px">Collection Point</div>
  <span class="a ml" style="top:202.5px">Location<b>*</b></span>
  <div class="a in" style="top:197.7px">Collection Point</div>
  <span class="a ml" style="top:227.5px">Radius<b>*</b></span>
  <div class="a in" style="top:222.7px">50</div>
  <span class="a ml" style="top:253px">Preferred Selection</span>
  <div class="a" style="left:126px;top:253px;width:12px;height:12px;border-radius:50%;border:1.2px solid #1a82e8"></div>
  <div class="a" style="left:129px;top:256px;width:6px;height:6px;border-radius:50%;background:#1a82e8"></div>
  <span class="a" style="left:144px;top:253.3px;font-size:10.5px;color:#222">Custom</span>
  <div class="a" style="left:188px;top:253px;width:12px;height:12px;border-radius:50%;border:1px solid #9a9a9a"></div>
  <span class="a" style="left:206.4px;top:253.3px;font-size:10.5px;color:#222">Repeat Every</span>
  <span class="a ml" style="top:277.5px">Every (Days)<b>*</b></span>
  <div class="a in" style="top:272.7px">2</div>
  <span class="a ml" style="top:302px">Start Date<b>*</b></span>
  <div class="a in" style="top:297.9px;width:243.5px">06-02-2026</div>
  <div class="a" style="left:377.5px;top:305px;width:7.5px;height:7.5px;border-radius:50%;background:#555"></div>
  <div class="a" style="left:380.7px;top:308.5px;width:1.2px;height:2.8px;background:#fff"></div>
  <div class="a" style="left:380.7px;top:306.5px;width:1.2px;height:1.1px;background:#fff"></div>
  <span class="a" style="left:88.8px;top:322.7px;font-size:7.4px;color:#e8262d">Note : Only active and not expired collection addresses are available</span>
  <div class="a btn" style="left:162px">Save</div>
  <div class="a btn" style="left:230px">Cancel</div>
 </div>
</div>
</body></html>
